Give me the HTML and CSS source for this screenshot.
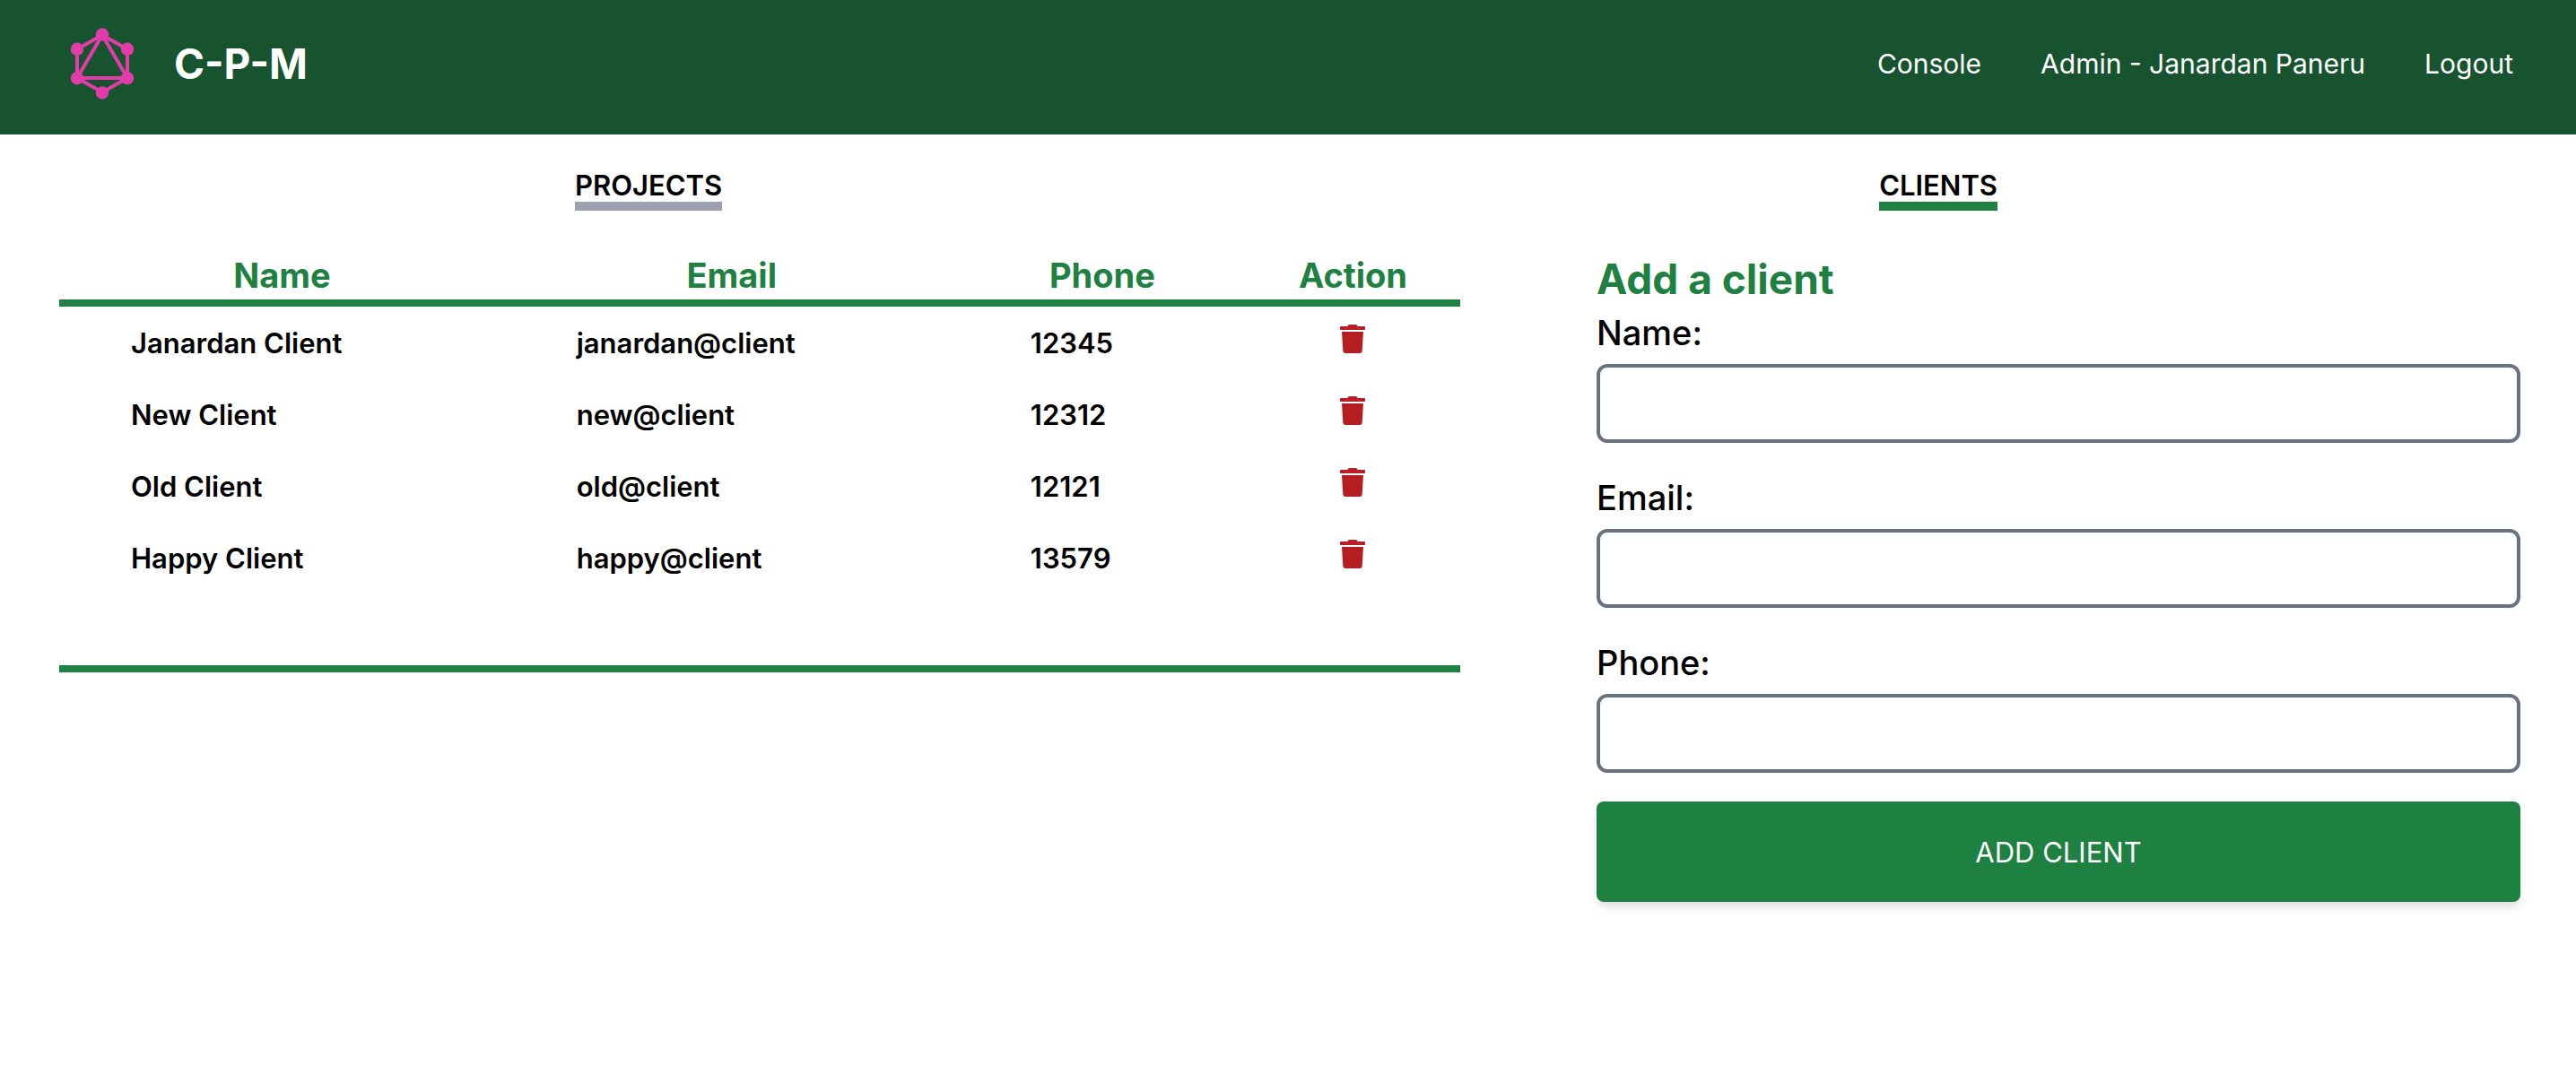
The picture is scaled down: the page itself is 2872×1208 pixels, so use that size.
FILE: index.html
```html
<!DOCTYPE html>
<html lang="en">
<head>
<meta charset="utf-8">
<meta name="viewport" content="width=device-width, initial-scale=1">
<title>C-P-M</title>
<link rel="stylesheet" href="styles.css">
</head>
<body>
<svg class="sprite" aria-hidden="true">
  <symbol id="trash" viewBox="0 0 448 512">
    <path d="M432 32H312l-9.4-18.7A24 24 0 0 0 281.1 0H166.8a23.72 23.72 0 0 0-21.4 13.3L136 32H16A16 16 0 0 0 0 48v32a16 16 0 0 0 16 16h416a16 16 0 0 0 16-16V48a16 16 0 0 0-16-16zM32 128l21.2 339a48 48 0 0 0 47.9 45h245.8a48 48 0 0 0 47.9-45L416 128z"/>
  </symbol>
</svg>
<header class="header">
  <a class="brand" href="#">
    <svg class="logo" viewBox="0 0 80 80" aria-hidden="true">
      <path class="logo-lines" d="M40 8L68 24V56L40 72L12 56V24ZM40 8L68 56H12Z"/>
      <g class="logo-nodes">
        <circle cx="40" cy="7.5" r="7.2"/>
        <circle cx="68" cy="23.8" r="7.2"/>
        <circle cx="68" cy="56.2" r="7.2"/>
        <circle cx="40" cy="72.5" r="7.2"/>
        <circle cx="12" cy="56.2" r="7.2"/>
        <circle cx="12" cy="23.8" r="7.2"/>
      </g>
    </svg>
    <span class="brand-name">C-P-M</span>
  </a>
  <nav class="nav">
    <a href="#">Console</a>
    <a href="#">Admin - Janardan Paneru</a>
    <a href="#">Logout</a>
  </nav>
</header>
<nav class="tabs">
  <a class="tab" href="#">PROJECTS</a>
  <a class="tab tab-active" href="#">CLIENTS</a>
</nav>
<main class="content">
  <section class="clients">
    <table class="client-table">
      <colgroup><col class="col-name"><col class="col-email"><col class="col-phone"><col class="col-action"></colgroup>
      <thead>
        <tr><th>Name</th><th>Email</th><th>Phone</th><th>Action</th></tr>
      </thead>
      <tbody>
        <tr><td>Janardan Client</td><td>janardan@client</td><td>12345</td><td class="action"><button class="delete" type="button" aria-label="Delete Janardan Client"><svg class="icon"><use href="#trash"/></svg></button></td></tr>
        <tr><td>New Client</td><td>new@client</td><td>12312</td><td class="action"><button class="delete" type="button" aria-label="Delete New Client"><svg class="icon"><use href="#trash"/></svg></button></td></tr>
        <tr><td>Old Client</td><td>old@client</td><td>12121</td><td class="action"><button class="delete" type="button" aria-label="Delete Old Client"><svg class="icon"><use href="#trash"/></svg></button></td></tr>
        <tr><td>Happy Client</td><td>happy@client</td><td>13579</td><td class="action"><button class="delete" type="button" aria-label="Delete Happy Client"><svg class="icon"><use href="#trash"/></svg></button></td></tr>
      </tbody>
    </table>
  </section>
  <form class="form">
    <h2 class="form-title">Add a client</h2>
    <div class="field"><label for="name">Name:</label><input id="name" type="text"></div>
    <div class="field"><label for="email">Email:</label><input id="email" type="email"></div>
    <div class="field"><label for="phone">Phone:</label><input id="phone" type="tel"></div>
    <button class="submit" type="button">ADD CLIENT</button>
  </form>
</main>
</body>
</html>
```
FILE: styles.css
```css
:root {
  --green: #1e8041;
  --green-dark: #18532f;
  --gray: #6a7280;
  --gray-light: #9ca1af;
  --red: #b61e22;
}

* {
  box-sizing: border-box;
}

body {
  margin: 0;
  background: #fff;
  color: #000;
  font-family: Inter, "Liberation Sans", sans-serif;
  font-size: 31px;
}

a {
  color: inherit;
  text-decoration: none;
}

button,
input {
  font: inherit;
}

.sprite {
  display: none;
}

.header {
  display: flex;
  align-items: flex-start;
  justify-content: space-between;
  padding: 30px 70px 38px 74px;
  background: var(--green-dark);
  color: #fff;
}

.brand {
  display: flex;
  align-items: center;
  gap: 40px;
}

.logo {
  width: 80px;
  height: 80px;
}

.logo-lines {
  fill: none;
  stroke: #e13caa;
  stroke-width: 4;
}

.logo-nodes {
  fill: #e13caa;
}

.brand-name {
  font-size: 46px;
  font-weight: 700;
  line-height: 82px;
}

.nav {
  display: flex;
  gap: 66px;
  font-size: 30px;
  line-height: 82px;
}

.tabs {
  display: flex;
  justify-content: space-around;
  gap: 8px;
  padding: 39px 4px 0 0;
}

.tab {
  border-bottom: 10px solid var(--gray-light);
  font-weight: 600;
  line-height: 36px;
}

.tab-active {
  border-color: var(--green);
}

.content {
  display: grid;
  grid-template-columns: 1562fr 1030fr;
  gap: 152px;
  align-items: start;
  padding: 45px 62px 45px 66px;
}

.clients {
  padding-bottom: 80px;
  border-bottom: 8px solid var(--green);
}

.client-table {
  width: 100%;
  table-layout: fixed;
  border-collapse: separate;
  border-spacing: 0;
}

.col-name {
  width: 31.8%;
}

.col-email {
  width: 32.4%;
}

.col-phone {
  width: 20.5%;
}

.client-table th {
  padding: 0;
  border-bottom: 8px solid var(--green);
  color: var(--green);
  font-size: 38px;
  font-weight: 700;
  line-height: 54px;
}

.client-table td {
  height: 80px;
  padding: 0 0 0 80px;
  font-weight: 600;
}

.client-table .action {
  padding: 0 0 14px;
  text-align: center;
}

.delete {
  display: inline-flex;
  padding: 0;
  border: 0;
  background: none;
  color: var(--red);
  vertical-align: middle;
}

.icon {
  width: 28px;
  height: 32px;
  fill: currentColor;
}

.form {
  display: grid;
  gap: 32px;
}

.form-title {
  margin: 0 0 -32px;
  color: var(--green);
  font-size: 46px;
  font-weight: 700;
  line-height: 62px;
}

.field {
  display: grid;
  gap: 6px;
}

.field label {
  font-size: 38px;
  font-weight: 500;
  line-height: 58px;
}

.field input {
  width: 100%;
  height: 88px;
  padding: 0 24px;
  border: 4px solid var(--gray);
  border-radius: 12px;
  background: #fff;
}

.submit {
  height: 112px;
  border: 0;
  border-radius: 8px;
  background: var(--green);
  box-shadow: 0 8px 12px -2px rgba(0, 0, 0, 0.1), 0 4px 8px -2px rgba(0, 0, 0, 0.06);
  color: #fff;
}
```
